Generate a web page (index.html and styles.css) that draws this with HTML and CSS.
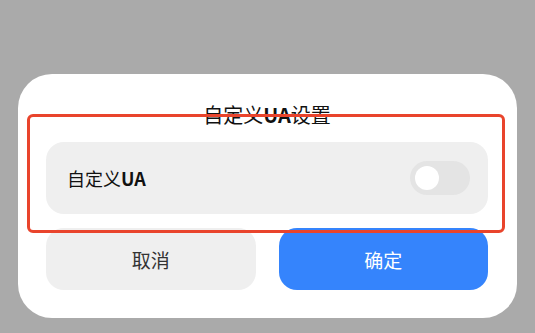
FILE: index.html
```html
<!DOCTYPE html>
<html>
<head>
<meta charset="utf-8">
<link rel="stylesheet" href="styles.css">
</head>
<body>
<div class="dialog">
  <div class="title">自定义<span class="latin">UA</span>设置</div>
  <div class="row">
    <span class="label">自定义<span class="latin">UA</span></span>
    <span class="switch"><span class="knob"></span></span>
  </div>
  <div class="actions">
    <button class="btn cancel">取消</button>
    <button class="btn ok">确定</button>
  </div>
  <div class="highlight"></div>
</div>
</body>
</html>
```
FILE: styles.css
```css
html, body {
  margin: 0;
  padding: 0;
}
body {
  width: 535px;
  height: 333px;
  background: #aaaaaa;
  font-family: "Noto Sans CJK SC", "Noto Sans", sans-serif;
  overflow: hidden;
}
.dialog {
  position: relative;
  margin: 74px 0 0 18px;
  width: 499px;
  height: 244px;
  box-sizing: border-box;
  background: #ffffff;
  border-radius: 34px;
  padding: 27px 29px 28px 28px;
  display: flex;
  flex-direction: column;
}
.title {
  font-size: 20px;
  line-height: 28px;
  height: 28px;
  text-align: center;
  color: #111;
}
.latin {
  font-weight: 600;
}
.row {
  margin-top: 13px;
  height: 72px;
  background: #efefef;
  border-radius: 18px;
  display: flex;
  align-items: center;
  justify-content: space-between;
  padding: 0 18px 0 21px;
}
.label {
  font-size: 18px;
  color: #111;
}
.switch {
  width: 60px;
  height: 34px;
  border-radius: 17px;
  background: #e4e4e4;
  display: flex;
  align-items: center;
  padding-left: 5px;
  box-sizing: border-box;
}
.knob {
  width: 24px;
  height: 24px;
  border-radius: 50%;
  background: #ffffff;
}
.actions {
  margin-top: 14px;
  display: flex;
  gap: 23px;
}
.btn {
  flex: 1;
  height: 62px;
  border: none;
  border-radius: 18px;
  font-family: "Noto Sans CJK SC", "Noto Sans", sans-serif;
  font-size: 19px;
  padding: 0;
}
.cancel {
  background: #efefef;
  color: #333;
}
.ok {
  background: #3584fc;
  color: #ffffff;
}
.highlight {
  position: absolute;
  left: 9px;
  top: 40px;
  width: 478px;
  height: 119px;
  box-sizing: border-box;
  border: 3px solid #e9442c;
  border-radius: 6px;
}
```
